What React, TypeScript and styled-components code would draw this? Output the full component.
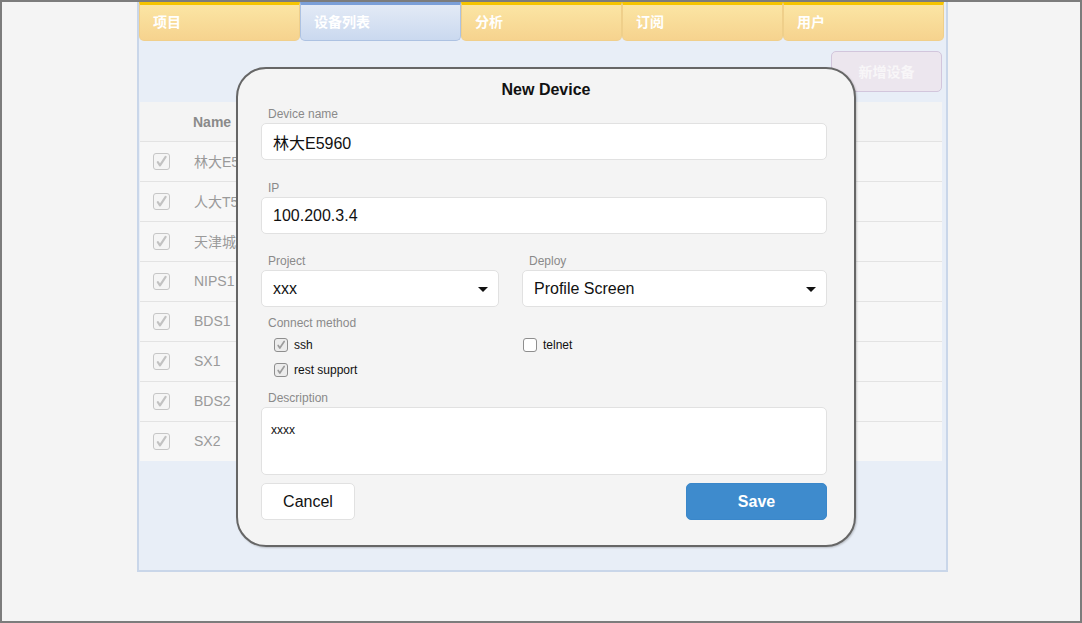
import React from "react";
import styled, { createGlobalStyle } from "styled-components";

const GlobalStyle = createGlobalStyle`
  html, body {
    margin: 0;
    padding: 0;
    background: #f4f4f4;
  }
  * {
    box-sizing: border-box;
  }
  body {
    font-family: "Liberation Sans", "Noto Sans CJK SC", sans-serif;
  }
`;

const Frame = styled.div`
  position: relative;
  width: 1082px;
  height: 623px;
  border: 2px solid #7c7c7c;
  background: #f4f4f4;
  overflow: hidden;
`;

const Panel = styled.div`
  margin-left: 135px;
  width: 811px;
  height: 570px;
  border: 2px solid #c9d6e9;
  border-top: 0;
  background: #e8eef7;
  display: flex;
  flex-direction: column;
`;

const Tabs = styled.div`
  display: grid;
  grid-template-columns: repeat(5, 161px);
  height: 39px;
`;

const Tab = styled.div<{ $active?: boolean }>`
  display: flex;
  align-items: center;
  padding: 0 0 3px 13px;
  font-size: 14px;
  font-weight: bold;
  color: #fff;
  border-radius: 0 0 5px 5px;
  border-top: 3px solid ${(p) => (p.$active ? "#7b9fd8" : "#f6c400")};
  border-left: 1px solid ${(p) => (p.$active ? "#adc2e2" : "#efcf8a")};
  border-right: 1px solid ${(p) => (p.$active ? "#adc2e2" : "#efcf8a")};
  border-bottom: 1px solid ${(p) => (p.$active ? "#adc2e2" : "#f0cf8c")};
  background: ${(p) =>
    p.$active
      ? "linear-gradient(#e3eaf6, #cad9ef)"
      : "linear-gradient(#fbe5a4, #f6d38e)"};
`;

const Toolbar = styled.div`
  display: flex;
  justify-content: flex-end;
  margin: 10px 4px 0 0;
`;

const NewButton = styled.button`
  width: 111px;
  height: 41px;
  padding-bottom: 3px;
  border: 1px solid #d2c6dc;
  border-radius: 5px;
  background: #ece6ee;
  color: #f8f6f8;
  font-family: inherit;
  font-size: 14px;
  font-weight: bold;
`;

const Table = styled.div`
  margin: 10px 4px 0 1px;
  display: flex;
  flex-direction: column;
`;

const HeadRow = styled.div`
  display: flex;
  align-items: center;
  height: 39px;
  padding-left: 53px;
  background: #f4f4f4;
  font-size: 14px;
  font-weight: bold;
  color: #8a8a8a;
`;

const Row = styled.div`
  display: flex;
  align-items: center;
  gap: 24px;
  height: 40px;
  padding: 0 0 1px 13px;
  background: #f7f7f7;
  border-top: 1px solid #e3e3e3;
  font-size: 14px;
  color: #9a9a9a;
`;

const Box = styled.span<{ $size: number; $dark?: boolean; $checked?: boolean }>`
  display: inline-flex;
  align-items: center;
  justify-content: center;
  width: ${(p) => p.$size}px;
  height: ${(p) => p.$size}px;
  border: 1px solid ${(p) => (p.$dark ? "#8e8e8e" : "#c6c6c6")};
  border-radius: 3px;
  background: ${(p) => (p.$dark && p.$checked ? "#ececec" : p.$dark ? "#fff" : "#f5f5f5")};
  flex: none;
`;

function Check(props: { size: number; dark?: boolean; checked?: boolean }) {
  const color = props.dark ? "#9c9c9c" : "#c2c2c2";
  return (
    <Box $size={props.size} $dark={props.dark} $checked={props.checked}>
      {props.checked && (
        <svg width={props.size - 4} height={props.size - 4} viewBox="0 0 12 12">
          <path
            d="M2.6 6.6 L4.6 9.6 L9.8 1.8"
            fill="none"
            stroke={color}
            strokeWidth="2"
            strokeLinecap="round"
            strokeLinejoin="round"
          />
        </svg>
      )}
    </Box>
  );
}

const Modal = styled.div`
  position: absolute;
  left: 234px;
  top: 65px;
  width: 620px;
  height: 480px;
  border: 2px solid #666;
  border-radius: 30px;
  background: #f4f4f4;
  box-shadow: 1px 1px 2px rgba(0, 0, 0, 0.2);
  padding: 10px 27px 0 23px;
  display: flex;
  flex-direction: column;
`;

const Title = styled.div`
  text-align: center;
  font-size: 16px;
  font-weight: bold;
  color: #111;
  height: 22px;
  line-height: 22px;
  margin-left: 4px;
`;

const Label = styled.div<{ $top: number }>`
  margin-top: ${(p) => p.$top}px;
  padding-left: 7px;
  font-size: 12px;
  color: #8a8a8a;
  height: 14px;
  line-height: 14px;
  margin-bottom: 2px;
`;

const Field = styled.div`
  display: flex;
  align-items: center;
  justify-content: space-between;
  height: 37px;
  padding: 0 10px 0 11px;
  background: #fff;
  border: 1px solid #e1e1e1;
  border-radius: 5px;
  font-size: 16px;
  color: #111;
`;

const TextArea = styled.div`
  height: 68px;
  padding: 15px 9px;
  background: #fff;
  border: 1px solid #e1e1e1;
  border-radius: 5px;
  font-size: 12px;
  color: #111;
`;

const Caret = styled.span`
  width: 0;
  height: 0;
  border-left: 5px solid transparent;
  border-right: 5px solid transparent;
  border-top: 5px solid #111;
  margin-top: 2px;
`;

const Pair = styled.div`
  display: grid;
  grid-template-columns: 238px 305px;
  column-gap: 23px;
`;

const Methods = styled.div`
  display: grid;
  grid-template-columns: 249px 1fr;
  padding-left: 13px;
`;

const Method = styled.label`
  display: flex;
  align-items: center;
  gap: 6px;
  height: 25px;
  font-size: 12px;
  color: #111;
`;

const Footer = styled.div`
  display: flex;
  justify-content: space-between;
  margin-top: 8px;
`;

const Button = styled.button<{ $primary?: boolean }>`
  height: 37px;
  width: ${(p) => (p.$primary ? 141 : 94)}px;
  border-radius: 5px;
  border: 1px solid ${(p) => (p.$primary ? "#3a87ca" : "#e1e1e1")};
  background: ${(p) => (p.$primary ? "#3e8bcd" : "#fff")};
  color: ${(p) => (p.$primary ? "#fff" : "#111")};
  font-family: inherit;
  font-size: 16px;
  font-weight: ${(p) => (p.$primary ? "bold" : "normal")};
`;

const tabs = ["项目", "设备列表", "分析", "订阅", "用户"];
const devices = ["林大E5960", "人大T5960", "天津城建", "NIPS1", "BDS1", "SX1", "BDS2", "SX2"];

export default function App() {
  return (
    <>
      <GlobalStyle />
      <Frame>
        <Panel>
          <Tabs>
            {tabs.map((t, i) => (
              <Tab key={t} $active={i === 1}>
                {t}
              </Tab>
            ))}
          </Tabs>
          <Toolbar>
            <NewButton>新增设备</NewButton>
          </Toolbar>
          <Table>
            <HeadRow>Name</HeadRow>
            {devices.map((d) => (
              <Row key={d}>
                <Check size={17} checked />
                {d}
              </Row>
            ))}
          </Table>
        </Panel>

        <Modal>
          <Title>New Device</Title>
          <Label $top={6}>Device name</Label>
          <Field>林大E5960</Field>
          <Label $top={21}>IP</Label>
          <Field>100.200.3.4</Field>
          <Pair>
            <div>
              <Label $top={20}>Project</Label>
              <Field>
                xxx
                <Caret />
              </Field>
            </div>
            <div>
              <Label $top={20}>Deploy</Label>
              <Field>
                Profile Screen
                <Caret />
              </Field>
            </div>
          </Pair>
          <Label $top={9}>Connect method</Label>
          <Methods>
            <Method>
              <Check size={14} dark checked />
              ssh
            </Method>
            <Method>
              <Check size={14} dark />
              telnet
            </Method>
            <Method>
              <Check size={14} dark checked />
              rest support
            </Method>
          </Methods>
          <Label $top={9}>Description</Label>
          <TextArea>xxxx</TextArea>
          <Footer>
            <Button>Cancel</Button>
            <Button $primary>Save</Button>
          </Footer>
        </Modal>
      </Frame>
    </>
  );
}
